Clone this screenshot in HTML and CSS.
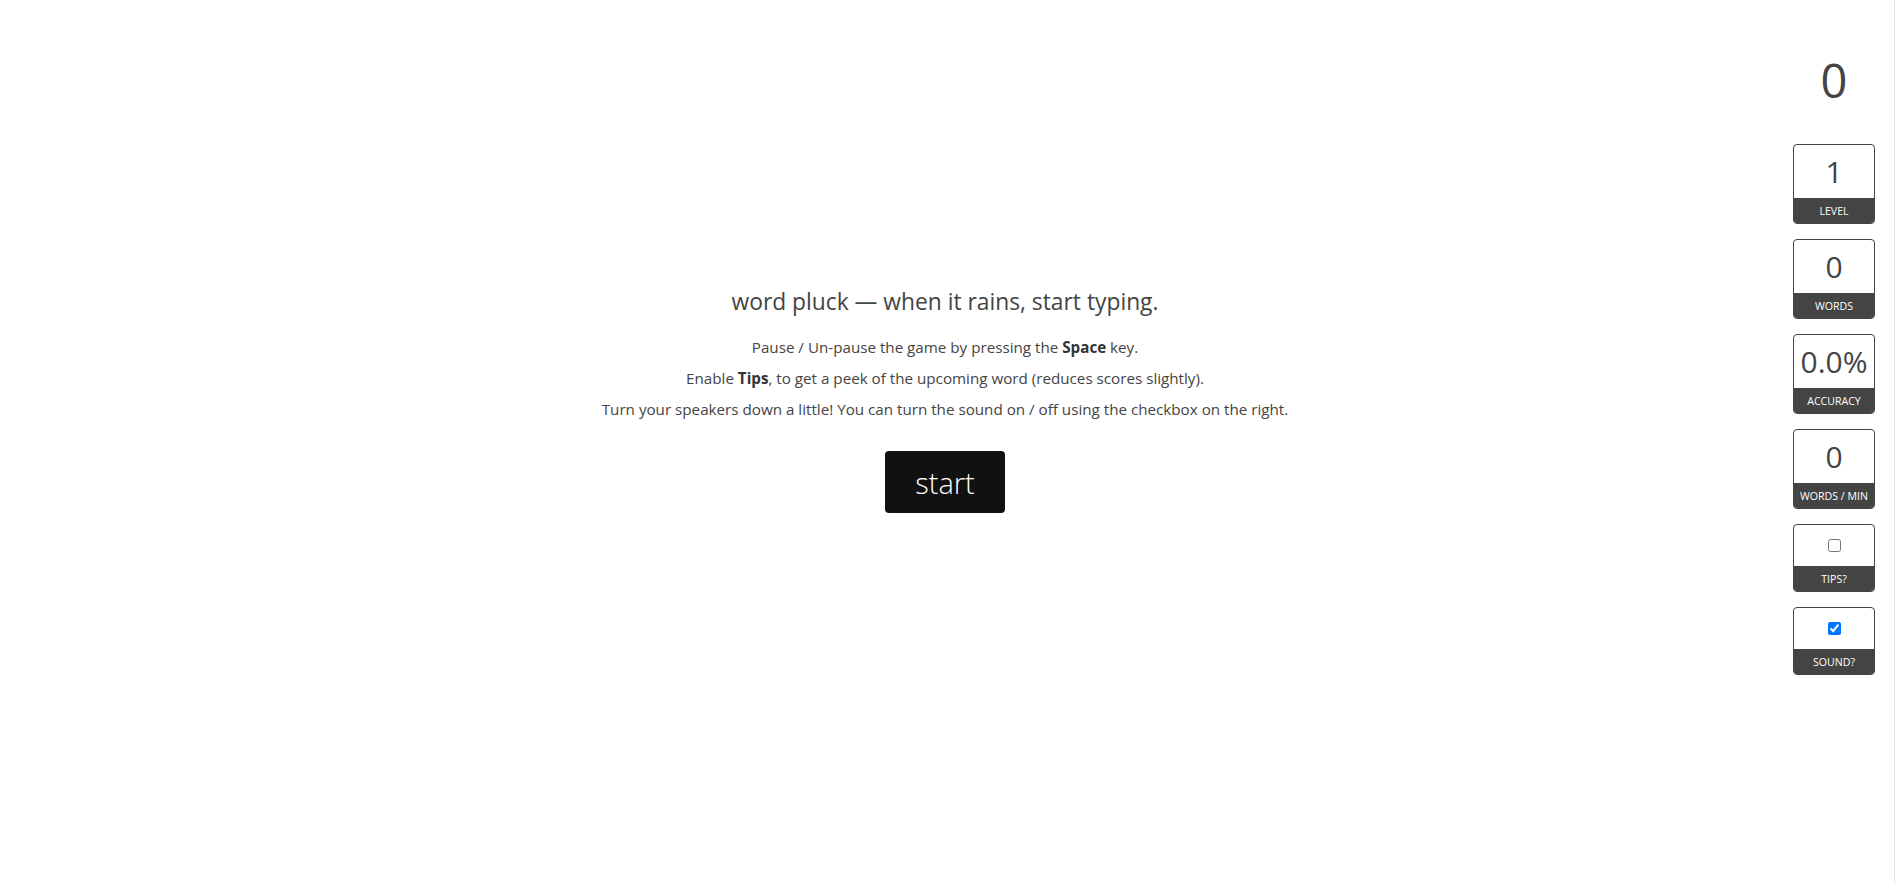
FILE: index.html
```html
<!DOCTYPE html>
<html lang="en">
<head>
<meta charset="utf-8">
<title>word pluck</title>
<link rel="stylesheet" href="styles.css">
</head>
<body>
<div class="app">
  <main class="stage">
    <h1 class="title">word pluck — when it rains, start typing.</h1>
    <p class="info">Pause / Un-pause the game by pressing the <b>Space</b> key.</p>
    <p class="info">Enable <b>Tips</b>, to get a peek of the upcoming word (reduces scores slightly).</p>
    <p class="info">Turn your speakers down a little! You can turn the sound on / off using the checkbox on the right.</p>
    <button class="start">start</button>
  </main>
  <aside class="sidebar">
    <div class="score">0</div>
    <div class="card"><div class="val">1</div><div class="lbl">Level</div></div>
    <div class="card"><div class="val">0</div><div class="lbl">Words</div></div>
    <div class="card"><div class="val">0.0%</div><div class="lbl">Accuracy</div></div>
    <div class="card"><div class="val">0</div><div class="lbl">Words / Min</div></div>
    <div class="card small"><div class="val"><input type="checkbox"></div><div class="lbl">Tips?</div></div>
    <div class="card small"><div class="val"><input type="checkbox" checked></div><div class="lbl">Sound?</div></div>
  </aside>
</div>
</body>
</html>
```
FILE: styles.css
```css
html, body {
  margin: 0;
  padding: 0;
  background: #fff;
}
body {
  font-family: "Open Sans", "Noto Sans", sans-serif;
  color: #444;
}
.app {
  position: relative;
  width: 1895px;
  height: 884px;
  border-right: 1px solid #e6e6e6;
  box-sizing: border-box;
}
.stage {
  width: 1890px;
  display: flex;
  flex-direction: column;
  align-items: center;
  padding-top: 284px;
}
.title {
  margin: 0 0 12px;
  font-size: 22.8px;
  line-height: 36px;
  font-weight: 400;
  color: #444;
}
.info {
  margin: 0;
  font-size: 15.2px;
  line-height: 31px;
  color: #444;
}
.info b {
  font-weight: 700;
  color: #333;
}
.start {
  margin-top: 26px;
  width: 120px;
  height: 62px;
  background: #111;
  color: #fff;
  border: none;
  border-radius: 4px;
  font-family: inherit;
  font-size: 29px;
  font-weight: 300;
  padding: 0;
}
.sidebar {
  position: absolute;
  top: 0;
  right: 0;
  width: 120px;
  display: flex;
  flex-direction: column;
  align-items: center;
  gap: 15px;
  padding-top: 52px;
}
.score {
  font-size: 47px;
  line-height: 56px;
  font-weight: 400;
  color: #444;
  margin-bottom: 21px;
}
.card {
  width: 82px;
  box-sizing: border-box;
  border: 1px solid #444;
  border-radius: 4px;
  overflow: hidden;
  display: flex;
  flex-direction: column;
}
.val {
  height: 53px;
  display: flex;
  align-items: center;
  justify-content: center;
  font-size: 30px;
  color: #444;
}
.card.small .val {
  height: 41px;
}
.val input {
  width: 13px;
  height: 13px;
  margin: 0;
}
.lbl {
  height: 25px;
  background: #444;
  color: #fff;
  font-size: 10.6px;
  text-transform: uppercase;
  display: flex;
  align-items: center;
  justify-content: center;
  white-space: nowrap;
}
```
